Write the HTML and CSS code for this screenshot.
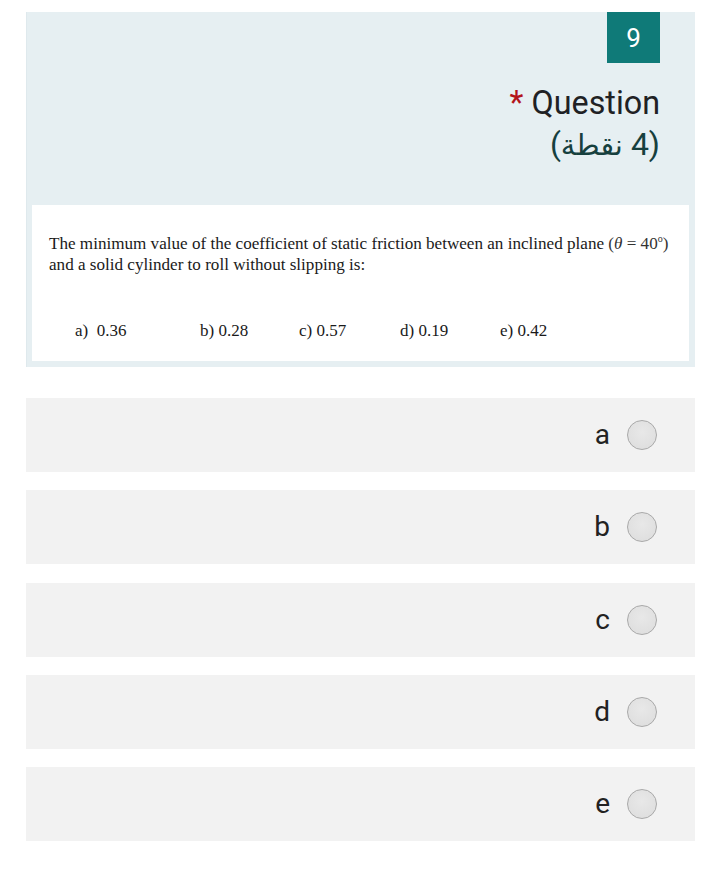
FILE: index.html
```html
<!DOCTYPE html>
<html lang="ar">
<head>
<meta charset="utf-8">
<title>Question 9</title>
<link rel="stylesheet" href="styles.css">
</head>
<body>
<main class="page">
  <section class="card">
    <header class="head">
      <div class="badge">9</div>
      <div class="title"><span class="req">*</span> Question</div>
      <div class="points" dir="rtl">(4 <span class="ar">نقطة</span>)</div>
    </header>
    <div class="figure">
      <p class="qtext">The minimum value of the coefficient of static friction between an inclined plane <span class="math">(<i>θ</i> = 40<sup>o</sup>)</span><br>and a solid cylinder to roll without slipping is:</p>
      <div class="choices">
        <span class="c1">a)&nbsp; 0.36</span>
        <span class="c2">b) 0.28</span>
        <span class="c3">c) 0.57</span>
        <span class="c4">d) 0.19</span>
        <span class="c5">e) 0.42</span>
      </div>
    </div>
  </section>
  <div class="options">
    <label class="opt"><span class="lbl">a</span><span class="radio"></span></label>
    <label class="opt"><span class="lbl">b</span><span class="radio"></span></label>
    <label class="opt"><span class="lbl">c</span><span class="radio"></span></label>
    <label class="opt"><span class="lbl">d</span><span class="radio"></span></label>
    <label class="opt"><span class="lbl">e</span><span class="radio"></span></label>
  </div>
</main>
</body>
</html>
```
FILE: styles.css
```css
html, body {
  margin: 0;
  padding: 0;
  background: #ffffff;
}
body {
  font-family: Roboto, "DejaVu Sans", sans-serif;
  color: #212121;
}
.page {
  padding: 12px 25px 0 26px;
}
.card {
  background: #e6eff2;
  border-left: 1px solid #dfe9ed;
  padding: 0 6px 6px 5px;
}
.head {
  display: flex;
  flex-direction: column;
  align-items: flex-end;
  padding-right: 29px;
}
.badge {
  width: 53px;
  height: 51px;
  background: #0f7a78;
  color: #ffffff;
  font-size: 26px;
  display: flex;
  align-items: center;
  justify-content: center;
}
.title {
  margin-top: 20px;
  font-size: 32.3px;
  line-height: 41px;
  color: #202124;
}
.req {
  color: #b3141a;
}
.points {
  font-size: 32px;
  line-height: 41px;
  color: #16403e;
}
.points .ar {
  font-size: 29px;
}
.figure {
  margin-top: 39px;
  background: #ffffff;
  height: 156px;
  padding: 0 0 0 17px;
  font-family: "Liberation Serif", "Times New Roman", serif;
  color: #1a1a1a;
}
.qtext {
  margin: 0;
  padding-top: 28px;
  font-size: 17.1px;
  line-height: 21px;
}
.math {
  color: #333;
}
.math sup {
  font-size: 10px;
  vertical-align: 7px;
  line-height: 0;
}
.choices {
  margin-top: 46px;
  font-size: 17px;
  line-height: 20px;
  display: flex;
}
.choices span { display: block; }
.c1 { margin-left: 26px; width: 125px; }
.c2 { width: 99px; }
.c3 { width: 101px; }
.c4 { width: 100px; }
.options {
  margin-top: 31px;
  display: flex;
  flex-direction: column;
  gap: 18.25px;
}
.opt {
  height: 74px;
  background: #f2f2f2;
  display: flex;
  align-items: center;
  justify-content: flex-end;
  gap: 17px;
  padding-right: 38px;
}
.lbl {
  font-size: 28px;
  color: #222;
  line-height: 1;
}
.radio {
  width: 28px;
  height: 28px;
  border-radius: 50%;
  border: 1px solid #a9a9a9;
  background: radial-gradient(circle at 50% 40%, #e8e8e8 0%, #dcdcdc 100%);
  box-sizing: content-box;
}
```
